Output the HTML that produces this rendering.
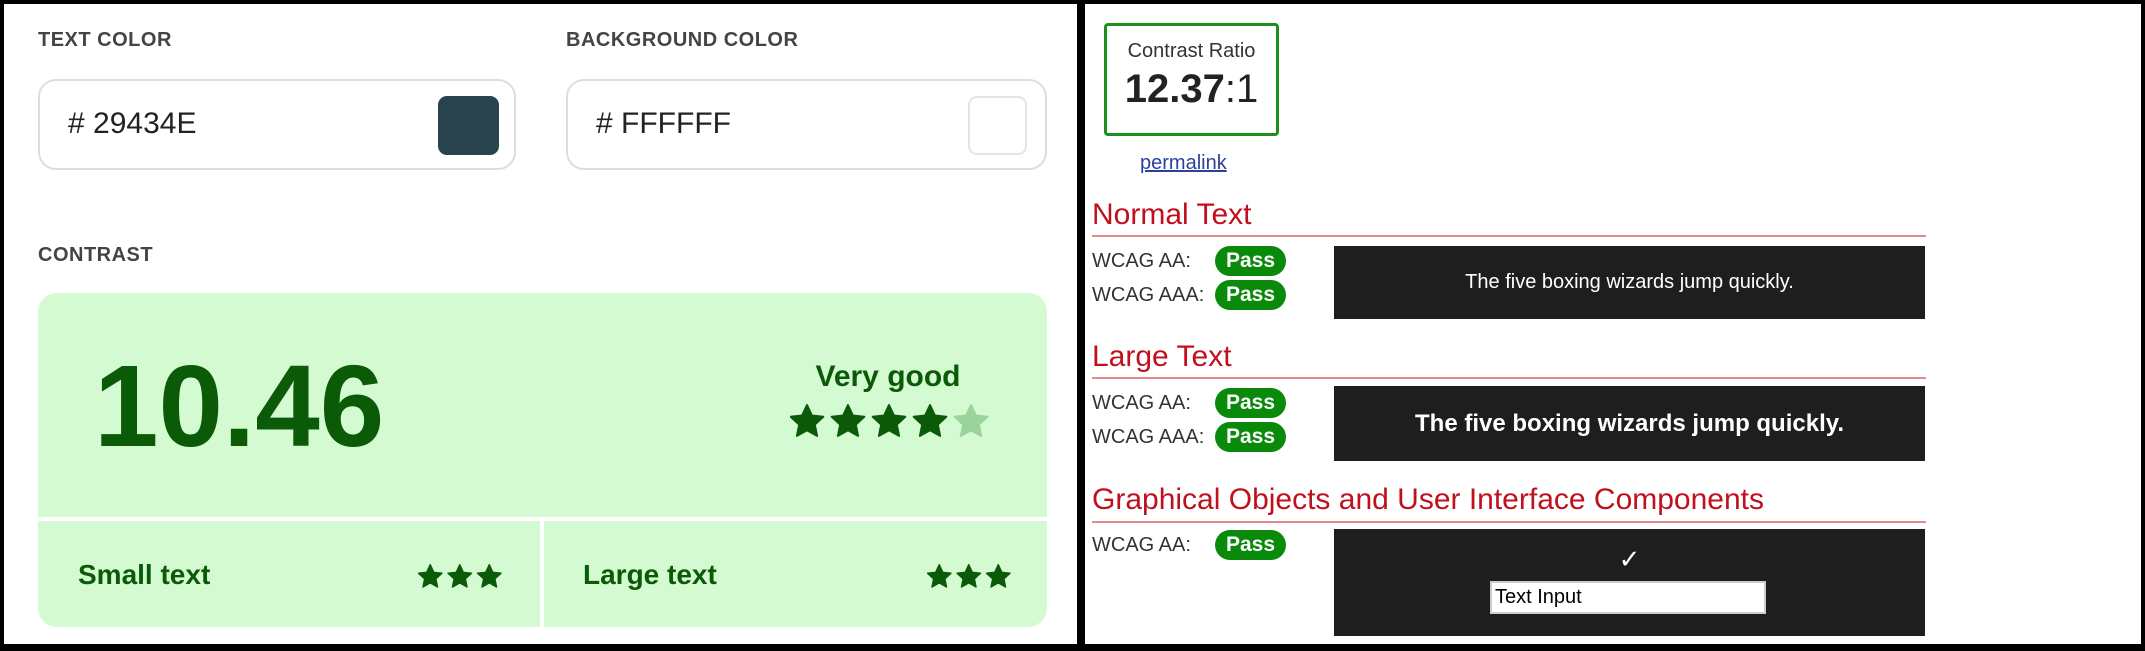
<!DOCTYPE html>
<html><head><meta charset="utf-8"><style>
*{margin:0;padding:0;box-sizing:border-box}
body{width:2145px;height:651px;background:#000;position:relative;overflow:hidden;font-family:"Liberation Sans",sans-serif}
.p{position:absolute;background:#fff}
.a{position:absolute;white-space:nowrap}
.lbl{font-size:20px;font-weight:bold;color:#444;letter-spacing:0.5px}
.inp{position:absolute;border:2px solid #ddd;border-radius:18px;background:#fff}
.hex{font-size:30px;color:#222}
.g{color:#0b5a08}
.red{color:#c0101e;font-size:30px}
.rl{position:absolute;height:2px;background:#e08a90;left:7px;width:834px}
.w{font-size:20px;color:#333}
.pass{position:absolute;width:71px;height:30px;border-radius:15px;background:#0a8a0a;color:#fff;font-weight:bold;font-size:21px;text-align:center;line-height:30px}
.dk{position:absolute;background:#1e1e1e;left:249px;width:591px;color:#fff;text-align:center}
</style></head><body>
<div class="p" style="left:4px;top:4px;width:1073px;height:640px">
<div class="a lbl" style="left:34px;top:25px">TEXT COLOR</div>
<div class="a lbl" style="left:562px;top:25px">BACKGROUND COLOR</div>
<div class="inp" style="left:34px;top:75px;width:478px;height:91px">
 <div class="a hex" style="left:28px;top:26px"># 29434E</div>
 <div class="a" style="left:398px;top:15px;width:61px;height:59px;background:#29434e;border-radius:9px"></div>
</div>
<div class="inp" style="left:562px;top:75px;width:481px;height:91px">
 <div class="a hex" style="left:28px;top:26px"># FFFFFF</div>
 <div class="a" style="left:400px;top:15px;width:59px;height:59px;border:2px solid #e4e4e4;border-radius:9px"></div>
</div>
<div class="a lbl" style="left:34px;top:240px">CONTRAST</div>
<div class="a" style="left:34px;top:289px;width:1009px;height:334px;background:#d3fad1;border-radius:19px;overflow:hidden">
 <div class="a" style="left:0;top:224px;width:1009px;height:4px;background:#fff"></div>
 <div class="a" style="left:502px;top:226px;width:4px;height:110px;background:#fff"></div>
 <div class="a g" style="left:56px;top:46px;font-size:116px;font-weight:bold;letter-spacing:0px">10.46</div>
 <div class="a g" style="left:770px;top:67px;font-size:30px;font-weight:bold;width:160px;text-align:center">Very good</div>
 <svg class="a" style="left:752px;top:111px" width="200" height="36" viewBox="0 0 200 36">
  <defs><path id="s" d="M17 1l4.9 10.5 11.4 1.3-8.5 7.8 2.3 11.3L17 26.2 6.9 31.9l2.3-11.3L.7 12.8l11.4-1.3z" stroke-linejoin="round" stroke-width="2"/></defs>
  <use href="#s" x="0" fill="#0b5a08" stroke="#0b5a08"/><use href="#s" x="41" fill="#0b5a08" stroke="#0b5a08"/><use href="#s" x="82" fill="#0b5a08" stroke="#0b5a08"/><use href="#s" x="123" fill="#0b5a08" stroke="#0b5a08"/><use href="#s" x="164" fill="#9ad49a" stroke="#9ad49a"/>
 </svg>
 <div class="a g" style="left:40px;top:266px;font-size:28px;font-weight:bold">Small text</div>
 <div class="a g" style="left:545px;top:266px;font-size:28px;font-weight:bold">Large text</div>
 <svg class="a" style="left:380px;top:271px" width="90" height="26" viewBox="0 0 90 26"><g fill="#0b5a08" stroke="#0b5a08" transform="scale(0.72)"><use href="#s" x="0"/><use href="#s" x="41"/><use href="#s" x="82"/></g></svg>
 <svg class="a" style="left:889px;top:271px" width="90" height="26" viewBox="0 0 90 26"><g fill="#0b5a08" stroke="#0b5a08" transform="scale(0.72)"><use href="#s" x="0"/><use href="#s" x="41"/><use href="#s" x="82"/></g></svg>
</div>
</div>
<div class="p" style="left:1085px;top:4px;width:1056px;height:640px">
 <div class="a" style="left:19px;top:19px;width:175px;height:113px;border:3px solid #1d8f1d;border-radius:4px;text-align:center">
  <div style="font-size:20px;color:#333;margin-top:14px">Contrast Ratio</div>
  <div style="font-size:40px;color:#222;margin-top:4px"><b>12.37</b>:1</div>
 </div>
 <div class="a" style="left:55px;top:148px;font-size:20px;color:#2a3fa0;text-decoration:underline">permalink</div>
 <div class="a red" style="left:7px;top:194px">Normal Text</div>
 <div class="rl" style="top:231px"></div>
 <div class="a w" style="left:7px;top:246px">WCAG AA:</div>
 <div class="a w" style="left:7px;top:280px">WCAG AAA:</div>
 <div class="pass" style="left:130px;top:242px">Pass</div>
 <div class="pass" style="left:130px;top:276px">Pass</div>
 <div class="dk" style="top:242px;height:73px;line-height:73px;font-size:20px">The five boxing wizards jump quickly.</div>
 <div class="a red" style="left:7px;top:336px">Large Text</div>
 <div class="rl" style="top:373px"></div>
 <div class="a w" style="left:7px;top:388px">WCAG AA:</div>
 <div class="a w" style="left:7px;top:422px">WCAG AAA:</div>
 <div class="pass" style="left:130px;top:384px">Pass</div>
 <div class="pass" style="left:130px;top:418px">Pass</div>
 <div class="dk" style="top:382px;height:75px;line-height:75px;font-size:24px;font-weight:bold">The five boxing wizards jump quickly.</div>
 <div class="a red" style="left:7px;top:479px">Graphical Objects and User Interface Components</div>
 <div class="rl" style="top:517px"></div>
 <div class="a w" style="left:7px;top:530px">WCAG AA:</div>
 <div class="pass" style="left:130px;top:526px">Pass</div>
 <div class="dk" style="top:525px;height:107px">
  <div style="font-size:26px;margin-top:17px;line-height:26px">✓</div>
  <div class="a" style="left:156px;top:52px;width:276px;height:33px;background:#fff;border:2px solid #ccc;color:#000;font-size:20px;text-align:left;line-height:29px;padding-left:3px">Text Input</div>
 </div>
</div>
</body></html>
